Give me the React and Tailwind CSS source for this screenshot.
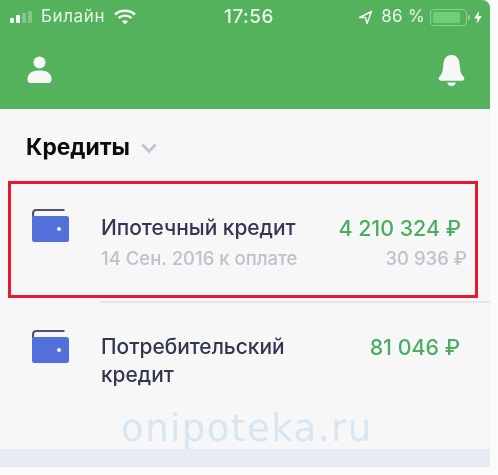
const Wallet = () => (
  <svg width="38" height="33" viewBox="0 0 38 33" className="shrink-0">
    <path d="M1 8V4.5C1 2.5 2.5 1 4.5 1H32.5" fill="none" stroke="#4d5668" strokeWidth="2.2" />
    <rect x="0" y="7" width="37" height="26" rx="2.5" fill="#5270dc" />
    <circle cx="27" cy="20" r="2" fill="#f4f5fb" />
  </svg>
);

const Signal = () => (
  <div className="flex items-end gap-[2px] h-[12px] w-[25px]">
    <span className="w-[4px] h-[5px] rounded-[1px] bg-[#f4f7f3]" />
    <span className="w-[4px] h-[8px] rounded-[1px] bg-[#f4f7f3]" />
    <span className="w-[4px] h-[10px] rounded-[1px] bg-[#85c68c]" />
    <span className="w-[4px] h-[12px] rounded-[1px] bg-[#85c68c]" />
  </div>
);

const StatusBar = () => (
  <div className="h-[30px] pt-[4px] pl-[10px] pr-[8px] flex items-center text-[#e9f4e9] text-[17px]">
    <div className="flex items-center flex-1">
      <Signal />
      <span className="ml-[6px] tracking-[0.6px]">Билайн</span>
      <svg width="22" height="16" viewBox="0 0 22 16" className="ml-[9px]">
        <path d="M1 5.5C6.5 0.5 15.5 0.5 21 5.5" fill="none" stroke="#f4f7f3" strokeWidth="2.4" />
        <path d="M4.5 9C8.2 5.8 13.8 5.8 17.5 9" fill="none" stroke="#f4f7f3" strokeWidth="2.4" />
        <path d="M8 12.3C9.8 11 12.2 11 14 12.3L11 15.5Z" fill="#f4f7f3" />
      </svg>
    </div>
    <span className="absolute left-[224px] text-[19px] font-medium tracking-[0.5px]">17:56</span>
    <div className="flex items-center">
      <svg width="15" height="15" viewBox="0 0 15 15">
        <path d="M1.5 7.5L13.5 1.5L9 13.5L7.5 7.5Z" fill="none" stroke="#f4f7f3" strokeWidth="1.4" strokeLinejoin="round" />
      </svg>
      <span className="ml-[8px] tracking-[0.3px]">86 %</span>
      <div className="ml-[5px] w-[37px] h-[17px] rounded-[4px] border border-[#8fce95] p-[2px]">
        <div className="h-full w-[27px] rounded-[2px] bg-[#70d078]" />
      </div>
      <span className="ml-[1px] w-[2px] h-[5px] bg-[#8fce95] rounded-r-[1px]" />
      <svg width="8" height="13" viewBox="0 0 8 13" className="ml-[4px]">
        <path d="M5 0L0 7.5H3.5L2.5 13L8 5H4.5Z" fill="#f4f7f3" />
      </svg>
    </div>
  </div>
);

const Row = ({ name, sum, date, due, boxed }) => (
  <div className={boxed ? "ml-[8px] mr-[12px] h-[117px] border-[3px] border-[#e8192c] pl-[21px] pr-[8px] pt-[25px] flex" : "ml-[8px] mr-[12px] pl-[24px] pr-[11px] pt-[27px] flex"}>
    <Wallet />
    <div className="ml-[31px] flex-1 min-w-0">
      <div className={`flex justify-between text-[20.9px] leading-[28px] font-medium ${boxed ? "mt-[5px]" : "mt-[3px]"}`}>
        <span className={`text-[#333750] ${boxed ? "" : "w-[210px]"}`}>{name}</span>
        <span className={`text-[#4cad62] text-[21.4px] ${boxed ? "mr-[6px]" : "mr-[7px]"}`}>{sum}</span>
      </div>
      {date && (
        <div className="mt-[3px] flex justify-between text-[18.5px] leading-[26px] font-medium text-[#bfc1cc]">
          <span>{date}</span>
          <span>{due}</span>
        </div>
      )}
    </div>
  </div>
);

export default function App() {
  return (
    <div className="relative w-[498px] h-[475px] bg-[#fbfbfb] overflow-hidden font-['Inter',sans-serif] blur-[0.4px]">
      <div className="w-[490px] h-[467px] bg-[#f7f7f7] flex flex-col">
        <div className="h-[109px] bg-[#54b25c] rounded-tr-[8px] shrink-0">
          <StatusBar />
          <div className="pl-[27px] pr-[25px] pt-[26px] flex justify-between items-start">
            <svg width="25" height="28" viewBox="0 0 27 30">
              <circle cx="13.5" cy="7" r="6.5" fill="#f6f7f6" />
              <path d="M0.5 25C0.5 18 6 15.5 13.5 15.5S26.5 18 26.5 25C26.5 28 25 29 23 29H4C2 29 0.5 28 0.5 25Z" fill="#f6f7f6" />
            </svg>
            <svg width="27" height="32" viewBox="0 0 28 33" className="-mt-[1px]">
              <path d="M14 0C8 0 6 4.5 5.5 10C5 17 4 20 1.5 22.5C0 24 0.5 26.5 3 26.5H25C27.5 26.5 28 24 26.5 22.5C24 20 23 17 22.5 10C22 4.5 20 0 14 0Z" fill="#f6f7f6" />
              <path d="M9.5 28.5H18.5C18 31 16.5 32 14 32S10 31 9.5 28.5Z" fill="#f6f7f6" />
            </svg>
          </div>
        </div>
        <div className="h-[72px] pl-[26px] pt-[23px] flex items-start shrink-0">
          <span className="text-[22.8px] leading-[30px] font-bold text-[#0c0c10]">Кредиты</span>
          <svg width="16" height="11" viewBox="0 0 16 11" className="ml-[11px] mt-[11px]">
            <path d="M1.5 1.5L8 8.5L14.5 1.5" fill="none" stroke="#bfc1cf" strokeWidth="2.6" />
          </svg>
        </div>
        <Row boxed name="Ипотечный кредит" sum="4 210 324 ₽" date="14 Сен. 2016 к оплате" due="30 936 ₽" />
        <div className="ml-[100px] mt-[3px] h-[2px] bg-[#e6e6e8] shrink-0" />
        <Row name="Потребительский кредит" sum="81 046 ₽" />
        <div className="mt-auto h-[18px] bg-[#e8eaf3] shrink-0" />
      </div>
      <span className="absolute left-[121px] top-[404px] text-[37px] leading-[50px] tracking-[1.5px] text-[#d5e8f2] font-['DejaVu_Sans',sans-serif]">onipoteka.ru</span>
    </div>
  );
}
